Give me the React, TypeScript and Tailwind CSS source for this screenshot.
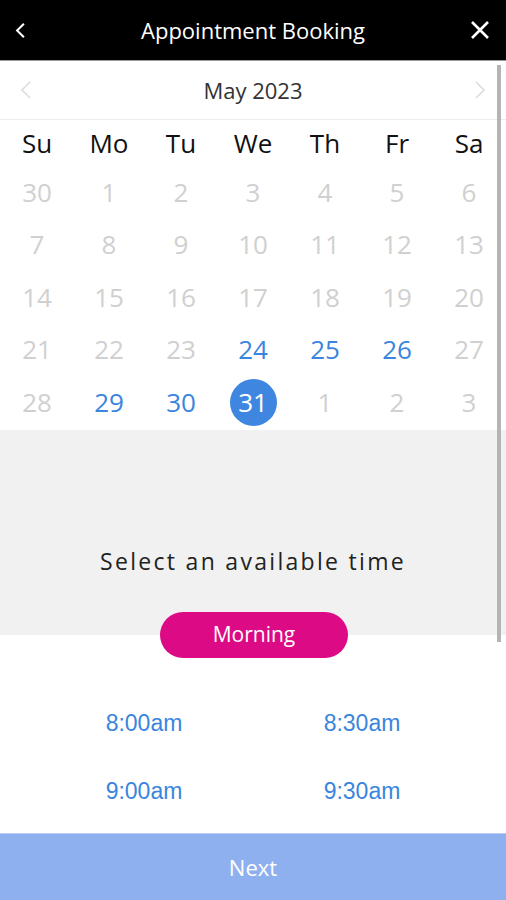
const weekdays = ["Su", "Mo", "Tu", "We", "Th", "Fr", "Sa"]

const weeks: { d: number; on?: boolean; sel?: boolean }[][] = [
  [{ d: 30 }, { d: 1 }, { d: 2 }, { d: 3 }, { d: 4 }, { d: 5 }, { d: 6 }],
  [{ d: 7 }, { d: 8 }, { d: 9 }, { d: 10 }, { d: 11 }, { d: 12 }, { d: 13 }],
  [{ d: 14 }, { d: 15 }, { d: 16 }, { d: 17 }, { d: 18 }, { d: 19 }, { d: 20 }],
  [
    { d: 21 },
    { d: 22 },
    { d: 23 },
    { d: 24, on: true },
    { d: 25, on: true },
    { d: 26, on: true },
    { d: 27 },
  ],
  [
    { d: 28 },
    { d: 29, on: true },
    { d: 30, on: true },
    { d: 31, sel: true },
    { d: 1 },
    { d: 2 },
    { d: 3 },
  ],
]

const times = ["8:00am", "8:30am", "9:00am", "9:30am"]

function Chevron({ dir, className }: { dir: "left" | "right"; className: string }) {
  return (
    <svg viewBox="0 0 12 20" className={className} fill="none" stroke="currentColor" strokeWidth="1.6">
      {dir === "left" ? <path d="M10 2 2 10l8 8" /> : <path d="M2 2l8 8-8 8" />}
    </svg>
  )
}

export default function App() {
  return (
    <div className="relative flex h-[900px] w-[506px] flex-col overflow-hidden bg-white font-['Open_Sans',sans-serif]">
      <header className="flex h-[60px] items-center bg-black px-[15px] text-white">
        <div className="flex w-[30px]">
          <svg viewBox="0 0 12 20" className="h-[17px] w-[11px]" fill="none" stroke="currentColor" strokeWidth="2.4">
            <path d="M10 2 2 10l8 8" />
          </svg>
        </div>
        <span className="flex-1 text-center text-[22px] font-medium">Appointment Booking</span>
        <div className="flex w-[30px] justify-end pr-px">
          <svg viewBox="0 0 20 20" className="h-[20px] w-[20px]" fill="none" stroke="currentColor" strokeWidth="2.6">
            <path d="M2 2l16 16M18 2 2 18" />
          </svg>
        </div>
      </header>
      <div className="h-px bg-[#9a9a9a]" />

      <div className="flex h-[59px] items-center justify-between border-b border-[#ececec] px-[20px]">
        <Chevron dir="left" className="h-[20px] w-[12px] text-[#dcdcdc]" />
        <span className="text-[22px] text-[#333]">May 2023</span>
        <Chevron dir="right" className="h-[20px] w-[12px] text-[#dcdcdc]" />
      </div>

      <div className="grid h-[46px] grid-cols-7 items-center px-px text-[26px] text-[#111]">
        {weekdays.map((w) => (
          <span key={w} className="text-center">
            {w}
          </span>
        ))}
      </div>

      {weeks.map((row, i) => (
        <div key={i} className="grid h-[52.5px] grid-cols-7 items-center px-px text-[26px]">
          {row.map((c, j) => (
            <div key={j} className="flex justify-center">
              {c.sel ? (
                <span className="flex h-[47px] w-[47px] items-center justify-center rounded-full bg-[#3f86e0] text-white">
                  {c.d}
                </span>
              ) : (
                <span className={c.on ? "text-[#3a85de]" : "text-[#d0d0d0]"}>{c.d}</span>
              )}
            </div>
          ))}
        </div>
      ))}

      <div className="mt-px flex h-[205px] flex-col items-center bg-[#f1f1f1] pt-[114px]">
        <span className="text-[23px] tracking-[2.3px] text-[#222]">Select an available time</span>
      </div>

      <div className="relative -mt-[23px] flex justify-center pl-[2px]">
        <button className="flex h-[46px] w-[188px] items-center justify-center rounded-full bg-[#dc0a84] text-[21px] text-white">
          Morning
        </button>
      </div>

      <div className="mt-[32px] grid grid-cols-2 px-[35px] font-['Liberation_Sans',Arial,sans-serif] text-[23px] text-[#3a85de]">
        {times.map((t) => (
          <div key={t} className="flex h-[68px] items-center justify-center">
            {t}
          </div>
        ))}
      </div>

      <button className="mt-auto flex h-[67px] items-center justify-center border-t border-[#b7cbf4] bg-[#8fb0ef] text-[22px] text-white">
        Next
      </button>

      <div className="absolute left-[497px] top-[65px] h-[577px] w-[4px] bg-[#b4b4b4]" />
    </div>
  )
}
